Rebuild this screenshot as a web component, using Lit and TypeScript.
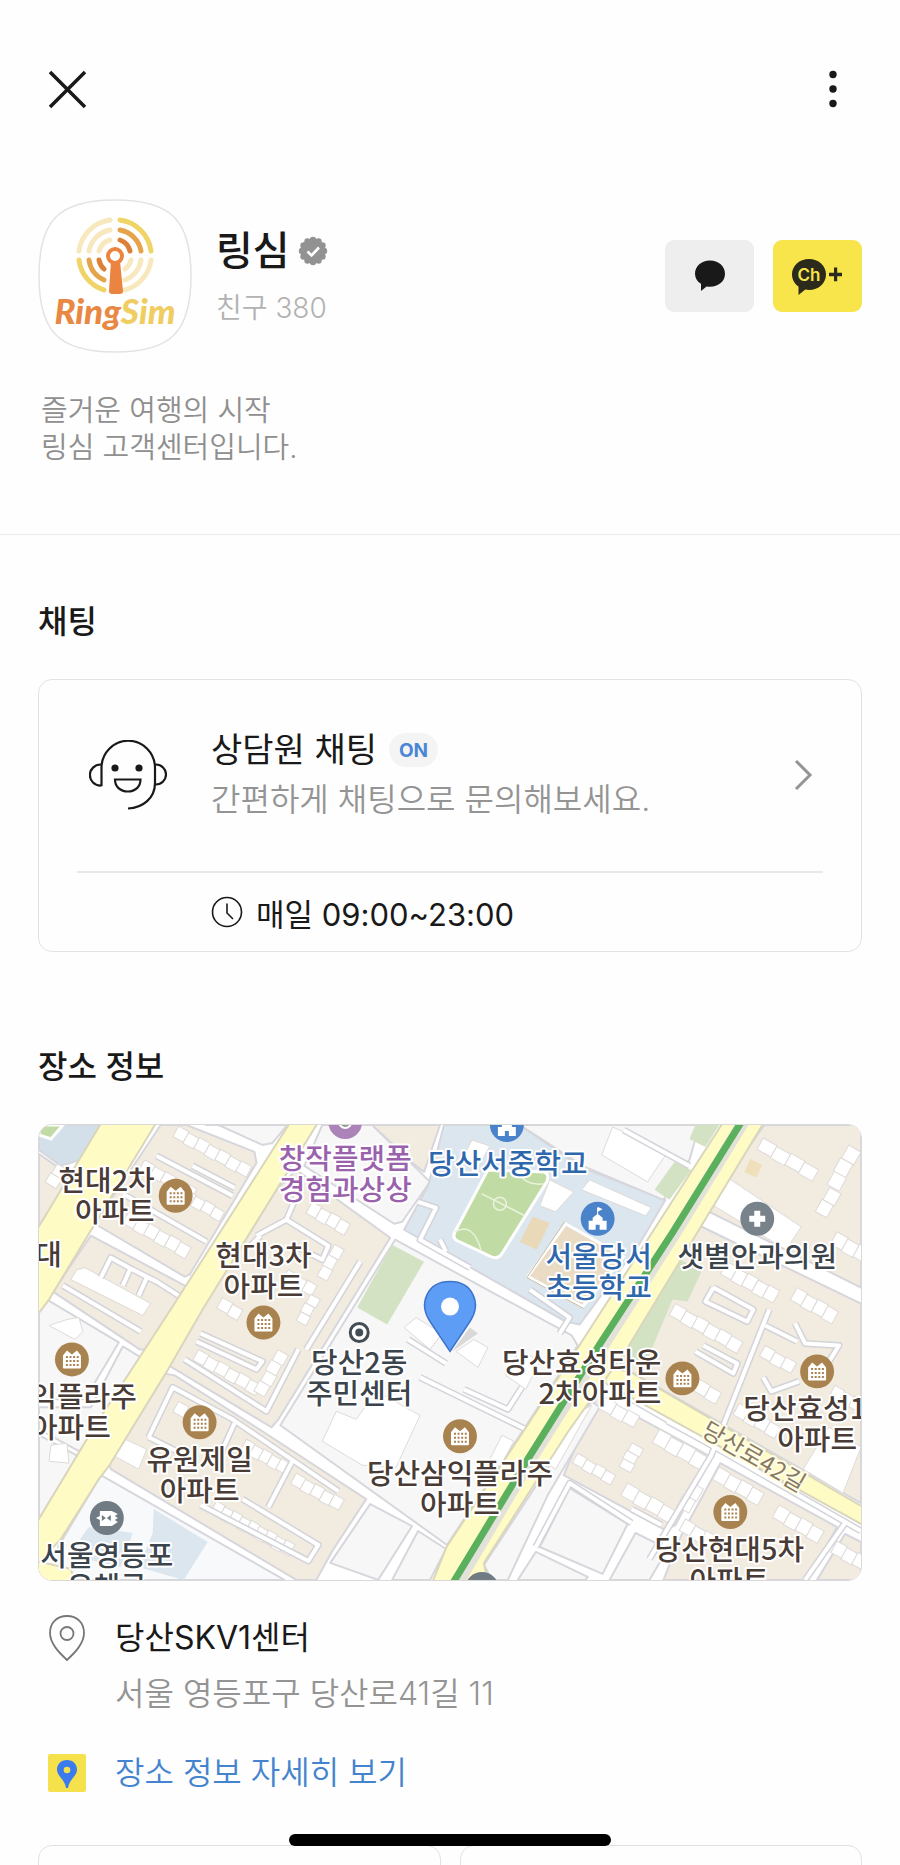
import { LitElement, html, svg, css } from "lit";
import { customElement, property } from "lit/decorators.js";

type Point = [number, number];

interface Block {
  fill: string;
  points: string;
}

interface BuildingRow {
  at: Point;
  count: number;
  w: number;
  h: number;
  angle: number;
}

interface Label {
  x: number;
  y: number;
  anchor: "start" | "middle" | "end";
  tone: string;
  lines: string[];
}

const BEIGE = "#f2ebe0";
const PALE = "#f8f7f7";
const SCHOOL = "#dbe6ef";
const GREEN = "#d3e2c3";

const BLOCKS: Block[] = [
  { fill: "#d3e0ea", points: "38,1125 101,1125 80,1160 60,1166 38,1150" },
  { fill: BEIGE, points: "38,1154 58,1168 76,1170 38,1226" },
  { fill: BEIGE, points: "160,1125 186,1125 254,1152 256,1163 189,1275 184,1277 94,1224" },
  { fill: PALE, points: "205,1125 287,1125 272,1143 262,1145 218,1125" },
  { fill: BEIGE, points: "90,1236 186,1287 145,1350 139,1350 52,1292" },
  { fill: PALE, points: "38,1302 46,1300 118,1343 84,1400 38,1400" },
  { fill: PALE, points: "122,1347 140,1358 82,1450 78,1452 38,1430 38,1408 90,1408" },
  { fill: PALE, points: "38,1436 79,1458 38,1522" },
  { fill: PALE, points: "322,1125 372,1125 430,1182 402,1222 394,1224 304,1166" },
  { fill: BEIGE, points: "372,1125 440,1125 424,1172 416,1166" },
  { fill: BEIGE, points: "266,1200 296,1170 390,1238 278,1420 271,1428 168,1366" },
  { fill: BEIGE, points: "163,1374 174,1376 262,1432 366,1500 332,1552 316,1581 296,1581 110,1470 108,1462" },
  { fill: "#f7f9fb", points: "100,1476 284,1581 60,1581 57,1548" },
  { fill: PALE, points: "395,1240 572,1336 578,1346 524,1430 447,1546 280,1426" },
  { fill: PALE, points: "370,1505 412,1527 378,1581 330,1564" },
  { fill: PALE, points: "418,1532 446,1550 430,1581 392,1581" },
  { fill: SCHOOL, points: "444,1125 520,1125 583,1168 666,1200 640,1244 580,1325 566,1322 404,1230 428,1186" },
  { fill: PALE, points: "520,1125 700,1125 690,1160 664,1200 583,1166" },
  { fill: BEIGE, points: "765,1125 862,1125 862,1288 706,1210" },
  { fill: BEIGE, points: "692,1222 862,1304 862,1504 620,1366 680,1256" },
  { fill: BEIGE, points: "598,1396 712,1458 676,1526 666,1531 564,1476" },
  { fill: BEIGE, points: "721,1464 838,1528 808,1581 664,1581 682,1536" },
  { fill: BEIGE, points: "846,1535 862,1543 862,1581 818,1581" },
  { fill: PALE, points: "592,1402 600,1408 548,1496 508,1581 492,1581 484,1566" },
  { fill: PALE, points: "570,1489 628,1525 603,1575 540,1548" },
  { fill: PALE, points: "636,1534 668,1550 650,1581 610,1581" },
  { fill: PALE, points: "536,1553 588,1578 586,1581 518,1581" },
];

const PATCHES: Block[] = [
  { fill: GREEN, points: "392,1245 424,1262 387,1325 357,1308" },
  { fill: GREEN, points: "675,1162 692,1170 670,1200 655,1190" },
  { fill: GREEN, points: "696,1125 720,1125 706,1147 690,1139" },
  { fill: GREEN, points: "680,1260 703,1270 688,1302 673,1300 652,1350 646,1366 620,1362" },
  { fill: "#dbe6ee", points: "153,1510 207,1543 183,1581 138,1568 152,1534" },
  { fill: "#dbe6ee", points: "88,1528 132,1534 120,1568 68,1556" },
  { fill: "#e9d9b8", points: "533,1217 550,1223 537,1250 520,1242" },
  { fill: "#eadcc4", points: "566,1226 622,1257 583,1305 530,1276" },
  { fill: "#efdfbb", points: "751,1159 763,1165 757,1178 745,1172" },
];

const WHITE_BUILDINGS: string[] = [
  "613,1127 668,1152 648,1182 602,1155",
  "730,1179 802,1227 787,1250 713,1205",
  "472,1140 490,1146 478,1168 462,1160",
  "590,1180 652,1208 646,1216 582,1190",
  "550,1180 574,1192 556,1212 540,1206",
  "336,1412 356,1420 376,1392 420,1416 396,1468 362,1466 322,1442",
  "66,1320 78,1318 82,1332 74,1340 48,1326",
  "50,1446 66,1444 68,1464 48,1462",
  "120,1438 146,1450 138,1470 112,1456",
  "830,1428 862,1448 844,1494 804,1470",
  "506,1376 520,1350 540,1362 526,1390",
  "76,1270 84,1268 150,1304 142,1316 70,1280",
  "560,1424 592,1406 556,1470 544,1462",
  "490,1460 502,1436 514,1442 500,1468",
  "404,1328 416,1318 442,1334 430,1350",
  "456,1352 474,1340 488,1348 478,1368",
];

const LANES: string[] = [
  "156,1156 232,1196",
  "192,1166 234,1188",
  "122,1194 206,1242",
  "100,1278 110,1258 132,1270 156,1282 178,1296",
  "122,1286 130,1268",
  "138,1296 146,1278",
  "62,1286 140,1332",
  "256,1236 286,1220 328,1246 322,1260 290,1244",
  "286,1220 298,1192",
  "260,1236 250,1246",
  "200,1334 262,1362 256,1370 196,1342",
  "184,1360 266,1412 298,1350",
  "360,1262 306,1350",
  "148,1438 172,1388 232,1420 338,1492",
  "148,1438 180,1454",
  "234,1424 214,1468",
  "292,1462 268,1508",
  "200,1506 308,1562 318,1546 242,1500",
  "418,1202 436,1208 420,1240 470,1268",
  "440,1240 446,1252",
  "530,1290 570,1318 560,1334",
  "624,1130 690,1166",
  "714,1288 754,1310 748,1322 706,1302 714,1288",
  "770,1310 712,1456 650,1560",
  "766,1326 798,1342",
  "796,1324 806,1344 840,1346 830,1362",
  "696,1352 734,1374 738,1364 704,1346",
  "764,1378 772,1392 800,1382",
  "668,1422 716,1448",
  "632,1510 662,1526",
  "846,1524 806,1581",
  "632,1400 862,1532",
  "420,1378 530,1432",
  "536,1548 570,1484 632,1524",
  "408,1340 446,1364",
  "464,1390 508,1410 522,1388",
];

const ROWS: BuildingRow[] = [
  { at: [178, 1126], count: 7, w: 12, h: 12, angle: 29 },
  { at: [144, 1160], count: 5, w: 12, h: 11, angle: 29 },
  { at: [186, 1190], count: 4, w: 11, h: 11, angle: 29 },
  { at: [128, 1212], count: 6, w: 12, h: 13, angle: 29 },
  { at: [44, 1182], count: 2, w: 11, h: 13, angle: -58 },
  { at: [312, 1202], count: 4, w: 11, h: 13, angle: 29 },
  { at: [344, 1250], count: 3, w: 12, h: 11, angle: 119 },
  { at: [288, 1270], count: 3, w: 11, h: 12, angle: 29 },
  { at: [222, 1298], count: 2, w: 12, h: 12, angle: 29 },
  { at: [320, 1300], count: 3, w: 10, h: 11, angle: 119 },
  { at: [198, 1350], count: 6, w: 12, h: 12, angle: 29 },
  { at: [288, 1356], count: 4, w: 12, h: 12, angle: 119 },
  { at: [178, 1402], count: 2, w: 12, h: 12, angle: 29 },
  { at: [246, 1440], count: 5, w: 10, h: 12, angle: 29 },
  { at: [296, 1474], count: 5, w: 11, h: 12, angle: 29 },
  { at: [216, 1502], count: 9, w: 10, h: 13, angle: 29 },
  { at: [764, 1138], count: 4, w: 16, h: 13, angle: 29 },
  { at: [862, 1152], count: 3, w: 15, h: 14, angle: 119 },
  { at: [842, 1194], count: 2, w: 14, h: 13, angle: 119 },
  { at: [838, 1232], count: 3, w: 13, h: 14, angle: 29 },
  { at: [728, 1262], count: 5, w: 12, h: 14, angle: 29 },
  { at: [798, 1288], count: 4, w: 12, h: 14, angle: 29 },
  { at: [676, 1304], count: 6, w: 13, h: 13, angle: 29 },
  { at: [766, 1346], count: 3, w: 12, h: 12, angle: 29 },
  { at: [700, 1380], count: 2, w: 13, h: 13, angle: 29 },
  { at: [740, 1404], count: 4, w: 12, h: 13, angle: 29 },
  { at: [836, 1386], count: 3, w: 11, h: 12, angle: 29 },
  { at: [606, 1398], count: 3, w: 13, h: 13, angle: 29 },
  { at: [660, 1430], count: 4, w: 14, h: 15, angle: 29 },
  { at: [644, 1450], count: 3, w: 9, h: 13, angle: 119 },
  { at: [578, 1454], count: 4, w: 11, h: 11, angle: 29 },
  { at: [628, 1484], count: 4, w: 14, h: 14, angle: 29 },
  { at: [720, 1468], count: 4, w: 13, h: 14, angle: 29 },
  { at: [780, 1506], count: 4, w: 13, h: 14, angle: 29 },
  { at: [704, 1490], count: 2, w: 14, h: 14, angle: 119 },
  { at: [686, 1520], count: 3, w: 12, h: 13, angle: 29 },
  { at: [838, 1542], count: 3, w: 12, h: 13, angle: 29 },
];

const LABELS: Label[] = [
  { x: 154, y: 1191, anchor: "end", tone: "apt", lines: ["현대2차", "아파트"] },
  { x: 61, y: 1265, anchor: "end", tone: "apt", lines: ["대"] },
  { x: 263, y: 1266, anchor: "middle", tone: "apt", lines: ["현대3차", "아파트"] },
  { x: 345, y: 1169, anchor: "middle", tone: "art", lines: ["창작플랫폼", "경험과상상"] },
  { x: 508, y: 1174, anchor: "middle", tone: "school", lines: ["당산서중학교"] },
  { x: 599, y: 1267, anchor: "middle", tone: "school", lines: ["서울당서", "초등학교"] },
  { x: 758, y: 1267, anchor: "middle", tone: "office", lines: ["샛별안과의원"] },
  { x: 359, y: 1374, anchor: "middle", tone: "office", lines: ["당산2동", "주민센터"] },
  { x: 136, y: 1408, anchor: "end", tone: "apt", lines: ["익플라주"] },
  { x: 110, y: 1439, anchor: "end", tone: "apt", lines: ["아파트"] },
  { x: 199, y: 1471, anchor: "middle", tone: "apt", lines: ["유원제일", "아파트"] },
  { x: 106, y: 1567, anchor: "middle", tone: "office", lines: ["서울영등포", "우체국"] },
  { x: 460, y: 1485, anchor: "middle", tone: "apt", lines: ["당산삼익플라주", "아파트"] },
  { x: 662, y: 1374, anchor: "end", tone: "apt", lines: ["당산효성타운", "2차아파트"] },
  { x: 744, y: 1420, anchor: "start", tone: "apt", lines: ["당산효성1"] },
  { x: 778, y: 1451, anchor: "start", tone: "apt", lines: ["아파트"] },
  { x: 730, y: 1561, anchor: "middle", tone: "apt", lines: ["당산현대5차", "아파트"] },
];

const APARTMENTS: Point[] = [
  [175, 1196],
  [263, 1323],
  [71, 1360],
  [199, 1423],
  [460, 1437],
  [683, 1379],
  [818, 1372],
  [731, 1513],
];

const SCHOOLS: Point[] = [
  [507, 1125],
  [598, 1219],
];

const LINE_STEP = 31;

@customElement("place-map")
export class PlaceMap extends LitElement {
  static styles = css`
    :host {
      display: block;
      overflow: hidden;
      border-radius: 14px;
      border: 1px solid #d9d9d9;
      box-sizing: border-box;
    }
    .canvas {
      display: block;
      width: 100%;
      height: auto;
    }
    .block {
      stroke: #d6d6dc;
      stroke-width: 2;
      stroke-linejoin: round;
    }
    .house {
      fill: #fff;
      stroke: #dedad8;
      stroke-width: 1;
    }
    .lane-edge {
      fill: none;
      stroke: #d3d3da;
      stroke-width: 7;
      stroke-linejoin: round;
    }
    .lane {
      fill: none;
      stroke: #fff;
      stroke-width: 4;
      stroke-linejoin: round;
    }
    .road {
      fill: #fffbc4;
      stroke: #d9d6bd;
      stroke-width: 2;
    }
    .label {
      font-family: "Noto Sans CJK KR", sans-serif;
      font-size: 29px;
      font-weight: 500;
      stroke: #fff;
      stroke-width: 4px;
      stroke-linejoin: round;
      paint-order: stroke;
    }
    .street {
      font-size: 24px;
      font-weight: 400;
      fill: #87795f;
      stroke: #fffde6;
    }
    .apt {
      fill: #493b35;
    }
    .art {
      fill: #9a62ad;
    }
    .school {
      fill: #2f67ad;
    }
    .office {
      fill: #3c444b;
    }
  `;

  private row({ at, count, w, h, angle }: BuildingRow) {
    return svg`<g transform="translate(${at[0]} ${at[1]}) rotate(${angle})">
      ${Array.from({ length: count }, (_, i) => svg`<rect class="house" x=${i * w} y=${i % 2} width=${w} height=${h}></rect>`)}
    </g>`;
  }

  private apartment([x, y]: Point) {
    return svg`<g transform="translate(${x} ${y})">
      <circle r="17" fill="#a9834f"></circle>
      <path d="M-9-4l4-5 5 4 5-4 4 5V8q0 1-1 1H-8q-1 0-1-1z" fill="#fff"></path>
      <path d="M-6-2.5H7M-6 1.5H7M-6 5.5H7" stroke="#a9834f" stroke-width="2" stroke-dasharray="2 1.6"></path>
    </g>`;
  }

  private school([x, y]: Point) {
    return svg`<g transform="translate(${x} ${y})">
      <circle r="17" fill="#4a83c9"></circle>
      <path d="M-9 11V2h4v-3l5-4 5 4v3h4v9H2V6h-4v5z" fill="#fff"></path>
      <path d="M0-4v-7" stroke="#fff" stroke-width="1"></path>
      <path d="M0-12l5 2.5L0-7z" fill="#fff"></path>
    </g>`;
  }

  private label({ x, y, anchor, tone, lines }: Label) {
    return svg`<text class="label ${tone}" text-anchor=${anchor}>
      ${lines.map((line, i) => svg`<tspan x=${x} y=${y + i * LINE_STEP}>${line}</tspan>`)}
    </text>`;
  }

  render() {
    return html`<svg class="canvas" viewBox="38 1125 824 456" role="img" aria-label="당산SKV1센터 지도">
      <rect x="38" y="1125" width="824" height="456" fill="#fff"></rect>
      ${BLOCKS.map((b) => svg`<polygon class="block" fill=${b.fill} points=${b.points}></polygon>`)}
      ${PATCHES.map((b) => svg`<polygon fill=${b.fill} points=${b.points}></polygon>`)}
      <path d="M38 1125h24l-12 14-12-4z" fill="#c2dba6" stroke="#fff" stroke-width="3"></path>
      ${WHITE_BUILDINGS.map((p) => svg`<polygon class="house" points=${p}></polygon>`)}
      ${ROWS.map((r) => this.row(r))}
      ${LANES.map((p) => svg`<polyline class="lane-edge" points=${p}></polyline>`)}
      ${LANES.map((p) => svg`<polyline class="lane" points=${p}></polyline>`)}

      <path
        d="M488 1170L544 1172Q550 1174 547 1182L502 1254Q498 1260 491 1257L457 1241Q452 1238 455 1232Z"
        fill="#c0dba3" stroke="#fff" stroke-width="3"
      ></path>
      <path
        d="M482 1194l43 22M455 1232q18-10 26 18M520 1174q6 12 24 10" fill="none" stroke="#e9f3de" stroke-width="1.5"
      ></path>
      <circle cx="500" cy="1204" r="6.5" fill="none" stroke="#e9f3de" stroke-width="1.5"></circle>
      <path d="M566 1224l58 33-41 50-55-30z" fill="none" stroke="#fff" stroke-width="3"></path>
      <path d="M565 1222L527 1278l57 31" fill="none" stroke="#c9bba0" stroke-width="1"></path>

      <polygon class="road" points="101,1122 156,1122 48,1300 36,1316 36,1230"></polygon>
      <polygon
        class="road"
        points="290,1122 318,1122 202,1310 165,1374 108,1467 98,1480 60,1540 36,1566 36,1523 95,1425 170,1310"
      ></polygon>
      <polygon class="road" points="36,1562 70,1570 74,1584 36,1584"></polygon>
      <polygon class="road" points="604,1368 630,1372 864,1508 864,1526 606,1384"></polygon>
      <polygon
        class="road"
        points="724,1122 765,1122 627,1350 568,1433 484,1564 488,1584 432,1584 447,1547 523,1433 577,1350"
      ></polygon>
      <polyline points="744,1122 676,1233 601,1350 531,1460 458,1584" fill="none" stroke="#e3e2da" stroke-width="12"></polyline>
      <polyline points="742,1122 673,1233 600,1345 528,1460 453,1584" fill="none" stroke="#5bb05e" stroke-width="7"></polyline>

      <g transform="translate(755 1457) rotate(30)">
        <text class="label street" text-anchor="middle" y="9">당산로42길</text>
      </g>

      <circle cx="345" cy="1122" r="12" fill="#fff" stroke="#ab83b9" stroke-width="10"></circle>
      <circle cx="345" cy="1122" r="5" fill="#8f9a8f"></circle>
      ${APARTMENTS.map((p) => this.apartment(p))} ${SCHOOLS.map((p) => this.school(p))}
      <g transform="translate(758 1219)">
        <circle r="17" fill="#77828a"></circle>
        <path d="M-3-8h6v5h5v6H3v5h-6V3h-5v-6h5z" fill="#fff"></path>
      </g>
      <g transform="translate(106 1519)">
        <circle r="17" fill="#707b83"></circle>
        <path d="M-11 0l4-2v-5H5l6 3-3 2 3 2-3 2 3 2-6 4H-7V2z" fill="#fff"></path>
        <path d="M-5-3l4 3-4 3zM4-3L0 0l4 3z" fill="#707b83"></path>
      </g>
      <circle cx="482" cy="1590" r="17" fill="#707b83"></circle>
      <circle cx="359" cy="1333" r="9" fill="#fff" stroke="#454d54" stroke-width="3"></circle>
      <circle cx="359" cy="1333" r="4" fill="#454d54"></circle>

      ${LABELS.map((l) => this.label(l))}

      <path d="M452 1352l26-18-8-6z" fill="#000" opacity="0.12"></path>
      <path
        d="M450 1352L430 1322C418 1304 427 1282 450 1282S482 1304 470 1322Z"
        fill="#5d9df6" stroke="#3d74cc" stroke-width="1.5"
      ></path>
      <circle cx="450" cy="1307" r="9" fill="#fff"></circle>
    </svg>`;
  }
}

@customElement("brand-avatar")
export class BrandAvatar extends LitElement {
  static styles = css`
    :host {
      display: block;
      flex: none;
    }
    .art {
      display: block;
      width: 154px;
      height: 154px;
    }
    .word {
      font-family: Lato, "Open Sans", sans-serif;
      font-size: 35px;
      font-weight: 900;
      font-style: italic;
    }
  `;

  render() {
    return html`<svg class="art" viewBox="0 0 154 154" role="img" aria-label="RingSim">
      <path
        d="M77 1C133 1 153 21 153 77S133 153 77 153 1 133 1 77 21 1 77 1Z"
        fill="#fff" stroke="#e3e3e3" stroke-width="1.5"
      ></path>
      <g fill="none" stroke-width="5" stroke-linecap="round">
        <g stroke="#f8e8bd">
          <path d="M41 52A36 36 0 0 1 72 21M51 52A26 26 0 0 1 72 31M61 52A16 16 0 0 1 72 41"></path>
          <path d="M113 61A36 36 0 0 1 87 91M103 61A26 26 0 0 1 87 81M93 61A16 16 0 0 1 87 70"></path>
        </g>
        <g stroke="#f1d467">
          <path d="M82 21A36 36 0 0 1 113 52M41 61A36 36 0 0 0 66 91"></path>
        </g>
        <g stroke="#e5a44b">
          <path d="M82 31A26 26 0 0 1 103 52M51 61A26 26 0 0 0 66 81"></path>
        </g>
        <g stroke="#dc8038">
          <path d="M82 41A16 16 0 0 1 92 52M61 61A16 16 0 0 0 66 70"></path>
        </g>
      </g>
      <path d="M73 62h9l3 30q0 3-3 3H74q-3 0-3-3z" fill="#ea8440"></path>
      <circle cx="77" cy="57" r="7" fill="#fff" stroke="#ea8440" stroke-width="4"></circle>
      <text class="word" x="77" y="125" text-anchor="middle">
        <tspan fill="#e88843">Ring</tspan><tspan fill="#efcd61">Sim</tspan>
      </text>
    </svg>`;
  }
}

@customElement("chat-card")
export class ChatCard extends LitElement {
  @property() heading = "";
  @property() status = "";
  @property() note = "";
  @property() hours = "";

  static styles = css`
    :host {
      display: block;
      border: 1px solid #e2e2e2;
      border-radius: 14px;
      padding: 0 38px;
    }
    .entry {
      display: flex;
      align-items: center;
      padding: 43px 10px 44px 12px;
      color: #191919;
      text-decoration: none;
      border-bottom: 2px solid #e8e8e8;
    }
    .agent {
      width: 78px;
      height: 70px;
      flex: none;
    }
    .copy {
      flex: 1;
      min-width: 0;
      margin-left: 44px;
      padding-bottom: 4px;
    }
    .line {
      display: flex;
      align-items: center;
      gap: 12px;
    }
    .heading {
      font-size: 34px;
      line-height: 54px;
      font-weight: 400;
      margin: 0;
    }
    .status {
      display: flex;
      align-items: center;
      height: 34px;
      padding: 0 10px;
      border-radius: 17px;
      background: #f4f4f4;
      color: #4a86d6;
      font-size: 19px;
      font-weight: 700;
    }
    .note {
      margin: 0;
      font-size: 32px;
      line-height: 46px;
      font-weight: 350;
      color: #949494;
    }
    .chevron {
      width: 20px;
      height: 32px;
      flex: none;
    }
    .hours {
      display: flex;
      align-items: center;
      gap: 13px;
      height: 78px;
      padding-left: 134px;
      font-size: 31px;
    }
    .clock {
      width: 32px;
      height: 32px;
      flex: none;
    }
  `;

  render() {
    return html`
      <a class="entry" href="#chat">
        <svg class="agent" viewBox="0 0 78 70" fill="none" stroke="#191919" stroke-width="2.2" aria-hidden="true">
          <path d="M12.5 46V28a26.5 27 0 0 1 53.5 0v15c0 15-12 25-27 25.5"></path>
          <path d="M12.5 24.5h-1a10.5 10.5 0 0 0 0 21.2h1M66 24.500h1a10 10 0 0 1 0 20h-1"></path>
          <path d="M26 39.5h25.5c0 7-5 12-12.7 12S26 46.5 26 39.5z"></path>
          <circle cx="26" cy="28" r="3.6" fill="#191919" stroke="none"></circle>
          <circle cx="50" cy="28" r="3.6" fill="#191919" stroke="none"></circle>
        </svg>
        <div class="copy">
          <div class="line">
            <h3 class="heading">${this.heading}</h3>
            <span class="status">${this.status}</span>
          </div>
          <p class="note">${this.note}</p>
        </div>
        <svg class="chevron" viewBox="0 0 20 32" fill="none" stroke="#949494" stroke-width="3" aria-hidden="true">
          <path d="M3 2l14 14L3 30"></path>
        </svg>
      </a>
      <div class="hours">
        <svg class="clock" viewBox="0 0 32 32" fill="none" stroke="#191919" stroke-width="1.6" aria-hidden="true">
          <circle cx="16" cy="16" r="14.5"></circle>
          <path d="M16 7.500v9.500l6 6"></path>
        </svg>
        <span>${this.hours}</span>
      </div>
    `;
  }
}

@customElement("app-root")
export class AppRoot extends LitElement {
  static styles = css`
    :host {
      display: block;
      height: 100vh;
      overflow: hidden auto;
      scrollbar-width: none;
      background: #fefefe;
      color: #191919;
      font-family: Inter, "Noto Sans CJK KR", sans-serif;
    }
    .bar {
      display: flex;
      justify-content: space-between;
      padding: 57px 35px 0;
    }
    .tool {
      display: grid;
      place-items: center;
      width: 64px;
      height: 64px;
      padding: 0;
      border: 0;
      background: none;
    }
    .glyph {
      width: 40px;
      height: 40px;
    }
    .profile {
      padding: 78px 38px 68px;
      border-bottom: 1px solid #ececec;
    }
    .identity {
      display: flex;
      align-items: center;
      gap: 24px;
    }
    .who {
      flex: 1;
    }
    .name-line {
      display: flex;
      align-items: center;
      gap: 8px;
    }
    .name {
      margin: 0;
      font-size: 40px;
      line-height: 54px;
      font-weight: 500;
    }
    .badge {
      width: 30px;
      height: 30px;
    }
    .friends {
      margin: 10px 0 0;
      font-size: 28px;
      line-height: 40px;
      font-weight: 350;
      color: #b2b2b2;
    }
    .actions {
      display: flex;
      gap: 19px;
    }
    .action {
      display: grid;
      place-items: center;
      width: 89px;
      height: 72px;
      padding: 0;
      border: 0;
      border-radius: 9px;
      background: #eeeeee;
    }
    .add {
      background: #f8e54b;
    }
    .action-art {
      width: 89px;
      height: 72px;
    }
    .ch {
      font-family: Inter, sans-serif;
      font-size: 17px;
      font-weight: 600;
      fill: #f8e54b;
    }
    .intro {
      margin: 39px 3px 0;
      font-size: 29px;
      line-height: 37px;
      font-weight: 350;
      color: #8f8f8f;
    }
    .section {
      padding: 65px 38px 28px;
    }
    .title {
      margin: 0 0 35px;
      font-size: 32px;
      line-height: 44px;
      font-weight: 500;
    }
    .place {
      display: grid;
      grid-template-columns: 38px 1fr;
      column-gap: 29px;
      align-items: center;
      margin: 33px 10px 0;
      font-size: 32px;
      line-height: 44px;
    }
    .pin {
      width: 38px;
      height: 48px;
    }
    .address {
      grid-column: 2;
      margin-top: 10px;
      font-weight: 350;
      color: #949494;
    }
    .more {
      display: flex;
      align-items: center;
      gap: 29px;
      margin: 35px 10px 0;
      font-size: 32px;
      line-height: 44px;
      font-weight: 350;
      color: #4484cf;
      text-decoration: none;
    }
    .map-icon {
      width: 38px;
      height: 38px;
    }
    .tiles {
      display: grid;
      grid-template-columns: 1fr 1fr;
      gap: 19px;
      margin-top: 50px;
    }
    .tile {
      height: 120px;
      border: 1px solid #e2e2e2;
      border-radius: 14px;
    }
    .home {
      position: fixed;
      left: 50%;
      bottom: 19px;
      width: 322px;
      height: 12px;
      transform: translateX(-50%);
      border-radius: 6px;
      background: #000;
    }
  `;

  private badge() {
    const bumps = Array.from({ length: 12 }, (_, i) => {
      const a = (i * Math.PI) / 6;
      return svg`<circle cx=${(15 + 11 * Math.sin(a)).toFixed(1)} cy=${(15 - 11 * Math.cos(a)).toFixed(1)} r="3.2"></circle>`;
    });
    return html`<svg class="badge" viewBox="0 0 30 30" fill="#929292" role="img" aria-label="인증됨">
      <circle cx="15" cy="15" r="12"></circle>
      ${bumps}
      <path d="M9.5 15.5l4 4 7.5-8" fill="none" stroke="#fff" stroke-width="2.6"></path>
    </svg>`;
  }

  render() {
    return html`
      <header class="bar">
        <button class="tool" aria-label="닫기">
          <svg class="glyph" viewBox="0 0 40 40" stroke="#191919" stroke-width="3.5" aria-hidden="true">
            <path d="M3 3l35 35M38 3L3 38"></path>
          </svg>
        </button>
        <button class="tool" aria-label="더보기">
          <svg class="glyph" viewBox="0 0 40 40" fill="#191919" aria-hidden="true">
            <circle cx="20" cy="5.5" r="3.7"></circle>
            <circle cx="20" cy="20" r="3.7"></circle>
            <circle cx="20" cy="34.5" r="3.7"></circle>
          </svg>
        </button>
      </header>

      <section class="profile">
        <div class="identity">
          <brand-avatar></brand-avatar>
          <div class="who">
            <div class="name-line">
              <h1 class="name">링심</h1>
              ${this.badge()}
            </div>
            <p class="friends">친구 380</p>
          </div>
          <div class="actions">
            <button class="action" aria-label="채팅하기">
              <svg class="action-art" viewBox="0 0 89 72" fill="#191919" aria-hidden="true">
                <path d="M45 20.5c8.500 0 15 5.700 15 13.200s-6.500 13-15 13c-1.200 0-2.300-.1-3.400-.3L36 51v-7.200c-3.800-2.300-6-5.800-6-10.100 0-7.500 6.500-13.200 15-13.200z"></path>
              </svg>
            </button>
            <button class="action add" aria-label="채널 추가">
              <svg class="action-art" viewBox="0 0 89 72" fill="#2c2b1b" aria-hidden="true">
                <path d="M36 19c9.600 0 17 6.800 17 15.500S45.600 50 36 50c-1.300 0-2.500-.1-3.700-.4L25.500 55v-8.500C21.500 43.700 19 39.500 19 34.500 19 25.800 26.400 19 36 19z"></path>
                <path d="M61 27.500h3.200v5.200H69v3.500h-4.800v5H61v-5h-5v-3.500h5z"></path>
                <text class="ch" x="36" y="41" text-anchor="middle">Ch</text>
              </svg>
            </button>
          </div>
        </div>
        <p class="intro">즐거운 여행의 시작<br />링심 고객센터입니다.</p>
      </section>

      <section class="section">
        <h2 class="title">채팅</h2>
        <chat-card
          heading="상담원 채팅"
          status="ON"
          note="간편하게 채팅으로 문의해보세요."
          hours="매일 09:00~23:00"
        ></chat-card>
      </section>

      <section class="section">
        <h2 class="title">장소 정보</h2>
        <place-map></place-map>
        <div class="place">
          <svg class="pin" viewBox="0 0 38 48" fill="none" stroke="#777" stroke-width="1.8" aria-hidden="true">
            <path d="M19 46C11 38.500 2 29.500 2 19 2 8.500 9 2 19 2s17 6.500 17 17c0 10.500-9 19.500-17 27z"></path>
            <circle cx="19" cy="19.5" r="6.5"></circle>
          </svg>
          <span>당산SKV1센터</span>
          <span class="address">서울 영등포구 당산로41길 11</span>
        </div>
        <a class="more" href="#place">
          <svg class="map-icon" viewBox="0 0 38 38" aria-hidden="true">
            <rect width="38" height="38" rx="2" fill="#f5e14b"></rect>
            <path d="M19 6c6 0 10 4.200 10 9.500 0 7-7.500 9-9 18.500h-2c-1.500-9.500-9-11.500-9-18.500C9 10.200 13 6 19 6z" fill="#3b7bee"></path>
            <circle cx="19" cy="16" r="3.3" fill="#f5e14b"></circle>
          </svg>
          <span>장소 정보 자세히 보기</span>
        </a>
        <div class="tiles">
          <div class="tile"></div>
          <div class="tile"></div>
        </div>
      </section>
      <div class="home"></div>
    `;
  }
}
